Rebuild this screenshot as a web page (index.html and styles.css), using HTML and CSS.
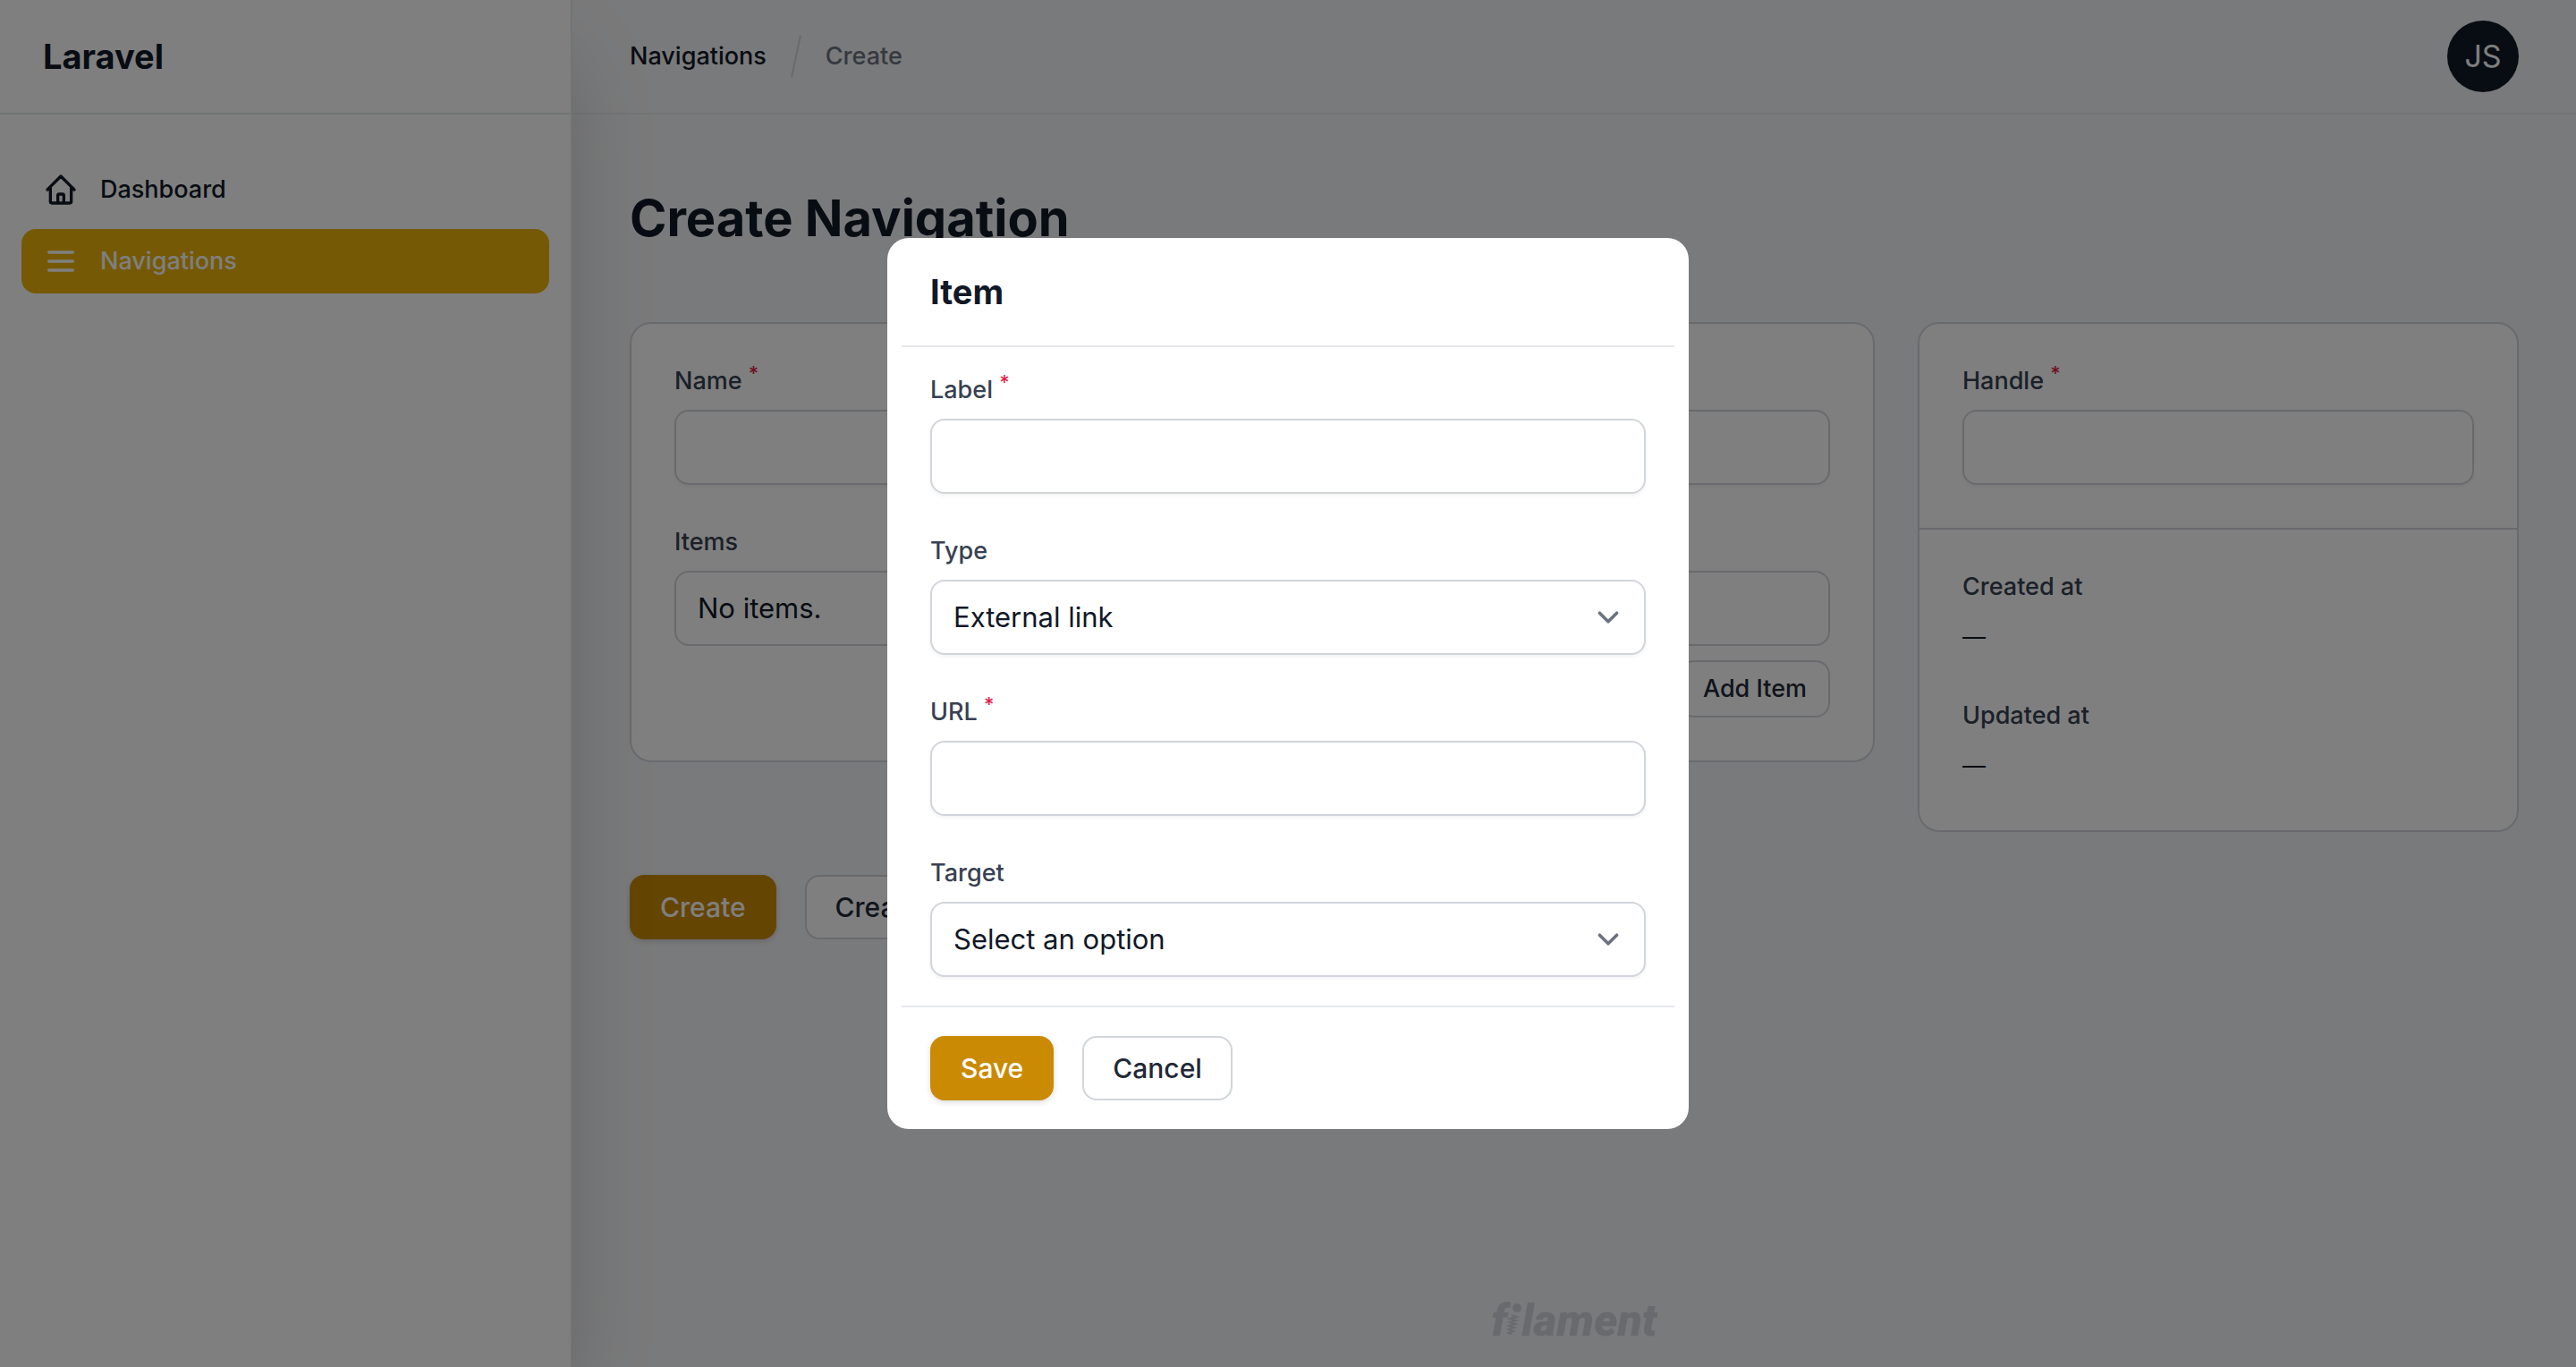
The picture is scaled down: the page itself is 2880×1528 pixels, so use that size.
FILE: index.html
```html
<!DOCTYPE html>
<html lang="en">
<head>
  <meta charset="utf-8">
  <meta name="viewport" content="width=device-width, initial-scale=1">
  <title>Create Navigation - Laravel</title>
  <link rel="stylesheet" href="styles.css">
</head>
<body>
  <div class="app">
    <aside class="sidebar">
      <header class="sidebar-header"><a class="brand" href="#">Laravel</a></header>
      <nav class="sidebar-nav">
        <a class="nav-item" href="#">
          <svg class="nav-icon" viewBox="0 0 24 24" aria-hidden="true"><path d="M3 12l2-2m0 0l7-7 7 7M5 10v10a1 1 0 001 1h3m10-11l2 2m-2-2v10a1 1 0 01-1 1h-3m-6 0a1 1 0 001-1v-4a1 1 0 011-1h2a1 1 0 011 1v4a1 1 0 001 1m-6 0h6"/></svg>
          <span>Dashboard</span>
        </a>
        <a class="nav-item active" href="#" aria-current="page">
          <svg class="nav-icon" viewBox="0 0 24 24" aria-hidden="true"><path d="M4 6h16M4 12h16M4 18h16"/></svg>
          <span>Navigations</span>
        </a>
      </nav>
    </aside>

    <div class="page">
      <header class="topbar">
        <nav class="breadcrumbs" aria-label="Breadcrumbs">
          <a href="#">Navigations</a>
          <span class="crumb-divider"></span>
          <a class="crumb-current" href="#">Create</a>
        </nav>
        <button class="avatar" type="button" aria-label="User menu">JS</button>
      </header>

      <main class="content">
        <h1>Create Navigation</h1>
        <form class="form">
          <div class="columns">
            <section class="card card-main">
              <div class="card-section">
                <div class="field">
                  <label for="name">Name <sup>*</sup></label>
                  <input class="control" id="name" type="text">
                </div>
                <div class="field">
                  <span class="field-label">Items</span>
                  <div class="items">
                    <div class="control empty">No items.</div>
                    <button class="btn btn-small" type="button">Add Item</button>
                  </div>
                </div>
              </div>
            </section>
            <section class="card">
              <div class="card-section">
                <div class="field">
                  <label for="handle">Handle <sup>*</sup></label>
                  <input class="control" id="handle" type="text">
                </div>
              </div>
              <div class="card-section">
                <div class="field">
                  <span class="field-label">Created at</span>
                  <span class="value">—</span>
                </div>
                <div class="field">
                  <span class="field-label">Updated at</span>
                  <span class="value">—</span>
                </div>
              </div>
            </section>
          </div>
          <div class="actions">
            <button class="btn btn-primary" type="button">Create</button>
            <button class="btn" type="button">Create &amp; create another</button>
          </div>
        </form>
      </main>

      <footer class="footer">
        <a class="logo" href="#" aria-label="filament"><span>f</span><svg class="logo-i" viewBox="0 0 16 38" aria-hidden="true"><circle cx="11" cy="5" r="5"/><path d="M5 13l6 2-8 2 7 2-7 2 6 2-7 2 6 2-7 2 6 2-6 2 4 1"/></svg><span>lament</span></a>
      </footer>
    </div>
  </div>

  <div class="overlay">
    <form class="modal" role="dialog" aria-modal="true" aria-labelledby="modal-title">
      <header class="modal-header"><h2 id="modal-title">Item</h2></header>
      <hr>
      <div class="modal-body">
        <div class="field">
          <label for="label">Label <sup>*</sup></label>
          <input class="control" id="label" type="text">
        </div>
        <div class="field">
          <label for="type">Type</label>
          <div class="select">
            <select class="control" id="type"><option>External link</option></select>
            <svg class="chevron" viewBox="0 0 20 20" aria-hidden="true"><path d="M6 8l4 4 4-4"/></svg>
          </div>
        </div>
        <div class="field">
          <label for="url">URL <sup>*</sup></label>
          <input class="control" id="url" type="text">
        </div>
        <div class="field">
          <label for="target">Target</label>
          <div class="select">
            <select class="control" id="target"><option>Select an option</option></select>
            <svg class="chevron" viewBox="0 0 20 20" aria-hidden="true"><path d="M6 8l4 4 4-4"/></svg>
          </div>
        </div>
      </div>
      <hr>
      <footer class="modal-footer">
        <button class="btn btn-primary" type="button">Save</button>
        <button class="btn" type="button">Cancel</button>
      </footer>
    </form>
  </div>
</body>
</html>
```
FILE: styles.css
```css
*, *::before, *::after { box-sizing: border-box; }

body {
  margin: 0;
  background: #f3f4f6;
  color: #111827;
  font-family: Inter, "Liberation Sans", sans-serif;
  font-size: 31px;
  line-height: 48px;
}

a { color: inherit; text-decoration: none; }
h1, h2 { margin: 0; font-weight: 700; }
input, select, button { font: inherit; color: inherit; }

.app { display: flex; min-height: 100vh; }

/* Sidebar */
.sidebar {
  position: relative;
  z-index: 1;
  flex: 0 0 640px;
  background: #fff;
  border-right: 2px solid #e5e7eb;
  box-shadow: 0 50px 100px -24px rgba(0, 0, 0, .25);
}
.sidebar-header {
  display: flex;
  align-items: center;
  height: 128px;
  padding: 0 48px;
  border-bottom: 2px solid #e5e7eb;
}
.brand { font-size: 38px; font-weight: 700; }
.sidebar-nav {
  display: flex;
  flex-direction: column;
  gap: 8px;
  padding: 48px 24px;
}
.nav-item {
  display: flex;
  align-items: center;
  gap: 24px;
  height: 72px;
  padding: 0 24px;
  border-radius: 16px;
  font-size: 27px;
  font-weight: 500;
}
.nav-item.active { background: #eab308; color: #fff; }
.nav-icon {
  width: 40px;
  height: 40px;
  fill: none;
  stroke: currentColor;
  stroke-width: 2;
  stroke-linecap: round;
  stroke-linejoin: round;
}

/* Top bar */
.page { display: flex; flex: 1; flex-direction: column; min-width: 0; }
.topbar {
  display: flex;
  align-items: center;
  justify-content: space-between;
  height: 128px;
  padding: 0 64px;
  border-bottom: 2px solid #e5e7eb;
}
.breadcrumbs {
  display: flex;
  align-items: center;
  gap: 32px;
  font-size: 27px;
  font-weight: 500;
}
.crumb-divider {
  height: 48px;
  border-right: 2px solid #d1d5db;
  transform: rotate(12deg);
}
.crumb-current { color: #6b7280; }
.avatar {
  width: 80px;
  height: 80px;
  padding: 0;
  border: 0;
  border-radius: 50%;
  background: #111827;
  color: #fff;
  font-size: 34px;
}

/* Content */
.content { flex: 1; padding: 80px 64px; }
h1 { margin-bottom: 80px; font-size: 56px; line-height: 72px; }
.form { display: grid; gap: 48px; }
.columns {
  display: grid;
  grid-template-columns: repeat(3, 1fr);
  align-items: start;
  gap: 48px;
}
.card { background: #fff; border: 2px solid #d1d5db; border-radius: 24px; }
.card-main { grid-column: span 2; }
.card-section { display: grid; gap: 48px; padding: 48px; }
.card-section + .card-section { border-top: 2px solid #d1d5db; }

/* Fields */
.field { display: grid; gap: 16px; }
.field label, .field-label {
  color: #374151;
  font-size: 27px;
  font-weight: 500;
  line-height: 32px;
}
.value { font-size: 26px; }
sup {
  color: #e11d48;
  font-size: 22px;
  line-height: 0;
}
.control {
  width: 100%;
  height: 84px;
  padding: 0 24px;
  background: #fff;
  border: 2px solid #d1d5db;
  border-radius: 16px;
  box-shadow: 0 2px 4px rgba(0, 0, 0, .05);
}
.empty { display: flex; align-items: center; box-shadow: none; }
.items { display: grid; justify-items: end; gap: 16px; }
.select { display: grid; align-items: center; }
.select > * { grid-area: 1 / 1; }
.select .control { appearance: none; padding-right: 80px; }
.chevron {
  justify-self: end;
  width: 48px;
  height: 48px;
  margin-right: 18px;
  fill: none;
  stroke: #6b7280;
  stroke-width: 1.5;
  stroke-linecap: round;
  stroke-linejoin: round;
  pointer-events: none;
}

/* Buttons */
.actions, .modal-footer { display: flex; gap: 32px; }
.btn {
  height: 72px;
  padding: 0 32px;
  background: #fff;
  border: 2px solid #d1d5db;
  border-radius: 16px;
  color: #1f2937;
  font-size: 30px;
  font-weight: 500;
}
.btn-small { height: 64px; padding: 0 24px; font-size: 27px; }
.btn-primary {
  background: #ca8a04;
  border-color: #ca8a04;
  box-shadow: 0 2px 6px rgba(0, 0, 0, .15);
  color: #fff;
}

/* Footer */
.footer { display: flex; justify-content: center; padding: 0 64px 32px; }
.logo {
  display: flex;
  align-items: center;
  color: #d1d5db;
  font-family: Roboto, "Noto Sans", sans-serif;
  font-size: 50px;
  font-style: italic;
  font-weight: 900;
  line-height: 40px;
}
.logo-i { width: 16px; height: 38px; fill: currentColor; }
.logo-i path { fill: none; stroke: currentColor; stroke-width: 2; }

/* Modal */
.overlay {
  position: fixed;
  inset: 0;
  z-index: 2;
  display: flex;
  align-items: center;
  justify-content: center;
  background: rgba(0, 0, 0, .5);
}
.modal {
  width: 100%;
  max-width: 896px;
  background: #fff;
  border-radius: 24px;
}
.modal-header { padding: 32px 48px; }
.modal h2 { font-size: 38px; line-height: 56px; }
.modal hr { height: 2px; margin: 0 16px; border: 0; background: #e5e7eb; }
.modal-body { display: grid; gap: 48px; padding: 32px 48px; }
.modal-footer { padding: 32px 48px; }
```
